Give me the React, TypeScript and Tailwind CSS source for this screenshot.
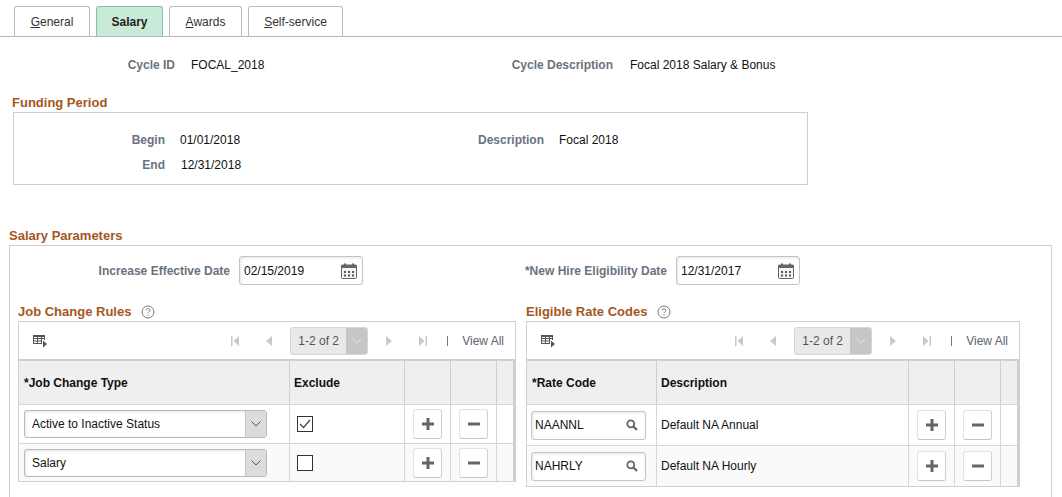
import React from 'react';

const font = 'font-["Liberation_Sans",Arial,sans-serif]';
const heading = 'text-[13px] font-bold leading-[16px] text-[#a5561e]';
const label = 'text-[12px] font-bold leading-[16px] text-[#6a7280] text-right';
const th = 'border-r border-[#cfcfcf] bg-[#efefef] flex items-center text-[12px] font-bold text-[#111]';

function Calendar() {
  return (
    <svg width="16" height="16" viewBox="0 0 16 16" className="shrink-0">
      <rect x="0.5" y="2" width="15" height="13.5" rx="1" fill="#f4f4f4" stroke="#666" />
      <rect x="0" y="2" width="16" height="3" fill="#666" />
      <rect x="3" y="0.5" width="2" height="2.5" fill="#666" />
      <rect x="11" y="0.5" width="2" height="2.5" fill="#666" />
      <path d="M3 8h2v2H3zM7 8h2v2H7zM11 8h2v2h-2zM3 11.5h2v2H3zM7 11.5h2v2H7zM11 11.5h2v2h-2z" fill="#555" />
    </svg>
  );
}

function Help() {
  return (
    <svg width="14" height="14" viewBox="0 0 14 14">
      <circle cx="7" cy="7" r="6" fill="none" stroke="#777" />
      <path d="M5 5.4C5 4.2 6 3.7 7 3.7s2 .6 2 1.6c0 1.4-2 1.500-2 3" fill="none" stroke="#777" />
      <rect x="6.500" y="9.400" width="1" height="1.200" fill="#777" />
    </svg>
  );
}

function GridIcon() {
  return (
    <svg width="15" height="14" viewBox="0 0 15 14">
      <path d="M0 1h12v9H0z" fill="#fff" stroke="none" />
      <path d="M0 1.500h12M0 4.500h12M0 7h9M0 9.500h8M.5 1v9M4.500 2v8M8.500 2v8M11.500 1v5" stroke="#555" fill="none" />
      <rect x="0" y="1" width="12" height="2" fill="#555" />
      <path d="M10 6.500l4 3.500-4 3.500z" fill="#555" />
    </svg>
  );
}

function Nav({ kind }: { kind: 'first' | 'prev' | 'next' | 'last' }) {
  return (
    <svg width="10" height="12" viewBox="0 0 10 12" className="shrink-0">
      {kind === 'first' && <path d="M1 1h1.500v10H1zM9 1v10L3.500 6z" fill="#c9c9c9" />}
      {kind === 'prev' && <path d="M8 1v10L2 6z" fill="#c9c9c9" />}
      {kind === 'next' && <path d="M2 1v10l6-5z" fill="#c9c9c9" />}
      {kind === 'last' && <path d="M7.500 1H9v10H7.500zM1 1v10l5.500-5z" fill="#c9c9c9" />}
    </svg>
  );
}

function Chevron({ color }: { color: string }) {
  return (
    <svg width="10" height="6" viewBox="0 0 10 6">
      <path d="M.5.500L5 5 9.500.500" fill="none" stroke={color} />
    </svg>
  );
}

function Search() {
  return (
    <svg width="12" height="12" viewBox="0 0 12 12" className="shrink-0">
      <circle cx="4.800" cy="4.800" r="3.500" fill="none" stroke="#666" strokeWidth="1.800" />
      <path d="M7.500 7.500l3.500 3.500" stroke="#666" strokeWidth="2.200" />
    </svg>
  );
}

function IconButton({ minus }: { minus?: boolean }) {
  return (
    <div className="w-[29px] h-[30px] bg-white border border-[#e2e2e2] border-b-[#c4c4c4] border-r-[#d0d0d0] rounded-[3px] flex items-center justify-center">
      <svg width="14" height="14" viewBox="0 0 14 14">
        <rect x="1" y="5.500" width="12" height="3" fill="#666" />
        {!minus && <rect x="5.500" y="1" width="3" height="12" fill="#666" />}
      </svg>
    </div>
  );
}

function Toolbar() {
  return (
    <div className="h-[37px] flex items-center pl-[14px] text-[12px] text-[#5c6470]">
      <GridIcon />
      <div className="ml-auto mr-[11px] flex items-center">
        <Nav kind="first" />
        <div className="w-[24px]" />
        <Nav kind="prev" />
        <div className="ml-[16px] w-[78px] h-[28px] rounded-[3px] border border-[#d6d6d6] bg-[#e9e9e9] flex overflow-hidden">
          <span className="flex-1 flex items-center justify-center text-[#555]">1-2 of 2</span>
          <span className="w-[21px] bg-[#c6c6c6] flex items-center justify-center">
            <Chevron color="#e4e4e4" />
          </span>
        </div>
        <div className="w-[16px]" />
        <Nav kind="next" />
        <div className="w-[24px]" />
        <Nav kind="last" />
        <div className="ml-[19px] w-px h-[10px] bg-[#777]" />
        <span className="ml-[14px] leading-[16px]">View All</span>
      </div>
    </div>
  );
}

function DateField({ value }: { value: string }) {
  return (
    <div className="w-[124px] h-[29px] border border-[#c4c4c4] rounded-[3px] bg-white shadow-[inset_1px_1px_3px_rgba(0,0,0,0.1)] flex items-center justify-between pl-[4px] pr-[5px] text-[12px] text-[#111]">
      <span>{value}</span>
      <Calendar />
    </div>
  );
}

function Select({ value }: { value: string }) {
  return (
    <div className="w-[243px] h-[28px] border border-[#b9b9b9] rounded-[3px] bg-white shadow-[inset_1px_1px_3px_rgba(0,0,0,0.1)] flex overflow-hidden text-[12px] text-[#111]">
      <span className="flex-1 flex items-center pl-[7px]">{value}</span>
      <span className="w-[21px] bg-[#dcdcdc] border-l border-[#c4c4c4] flex items-center justify-center">
        <Chevron color="#555" />
      </span>
    </div>
  );
}

function Check({ checked }: { checked?: boolean }) {
  return (
    <div className="ml-[3px] w-[16px] h-[16px] border border-[#333] bg-white flex items-center justify-center">
      {checked && (
        <svg width="12" height="10" viewBox="0 0 12 10">
          <path d="M1 5l3.500 3.500L11 1" fill="none" stroke="#444" strokeWidth="1.200" />
        </svg>
      )}
    </div>
  );
}

function Lookup({ value }: { value: string }) {
  return (
    <div className="w-[115px] h-[29px] border border-[#c4c4c4] rounded-[3px] bg-white shadow-[inset_1px_1px_3px_rgba(0,0,0,0.1)] flex items-center justify-between pl-[3px] pr-[7px] text-[12px] text-[#111]">
      <span>{value}</span>
      <Search />
    </div>
  );
}

const jobCols = 'grid grid-cols-[271px_115px_46px_46px_16px]';
const rateCols = 'grid grid-cols-[130px_252px_46px_46px_16px]';
const td = 'border-r border-[#d6d6d6] flex items-center text-[12px] text-[#111]';

function JobRow({ value, checked, odd }: { value: string; checked?: boolean; odd?: boolean }) {
  return (
    <div className={`${jobCols} border-t border-[#d6d6d6] ${odd ? 'h-[38px] bg-[#fafafa]' : 'h-[39px] bg-white'}`}>
      <div className={`${td} px-[5px]`}><Select value={value} /></div>
      <div className={`${td} px-[4px]`}><Check checked={checked} /></div>
      <div className={`${td} justify-center`}><IconButton /></div>
      <div className={`${td} justify-center`}><IconButton minus /></div>
      <div />
    </div>
  );
}

function RateRow({ code, desc, odd }: { code: string; desc: string; odd?: boolean }) {
  return (
    <div className={`${rateCols} h-[41px] border-t border-[#d6d6d6] ${odd ? 'bg-[#fafafa]' : 'bg-white'}`}>
      <div className={`${td} px-[4px]`}><Lookup value={code} /></div>
      <div className={`${td} px-[4px]`}>{desc}</div>
      <div className={`${td} justify-center`}><IconButton /></div>
      <div className={`${td} justify-center`}><IconButton minus /></div>
      <div />
    </div>
  );
}

export default function App() {
  return (
    <div className={`${font} w-[1062px] h-[497px] overflow-hidden bg-white text-[12px] text-[#111]`}>
      {/* tabs */}
      <div className="h-[37px] pt-[6px] pl-[14px] flex gap-[6px] border-b border-[#b5b5b5]">
        <div className="w-[76px] h-[30px] border border-b-0 border-[#bdbdbd] rounded-t-[3px] bg-white flex items-center justify-center text-[#333]"><span><u>G</u>eneral</span></div>
        <div className="w-[67px] h-[30px] border border-b-0 border-[#7dc8a2] rounded-t-[3px] bg-[#c9ead8] flex items-center justify-center font-bold text-[#222]">Salary</div>
        <div className="w-[73px] h-[30px] border border-b-0 border-[#bdbdbd] rounded-t-[3px] bg-white flex items-center justify-center text-[#333]"><span><u>A</u>wards</span></div>
        <div className="w-[95px] h-[30px] border border-b-0 border-[#bdbdbd] rounded-t-[3px] bg-white flex items-center justify-center text-[#333]"><span><u>S</u>elf-service</span></div>
      </div>

      {/* cycle */}
      <div className="flex items-center h-[16px] mt-[20px]">
        <div className={`${label} w-[175px]`}>Cycle ID</div>
        <div className="ml-[16px] w-[222px]">FOCAL_2018</div>
        <div className={`${label} w-[200px]`}>Cycle Description</div>
        <div className="ml-[17px]">Focal 2018 Salary &amp; Bonus</div>
      </div>

      {/* funding period */}
      <div className={`${heading} ml-[12px] mt-[22px]`}>Funding Period</div>
      <div className="ml-[13px] mt-[1px] w-[795px] h-[73px] border border-[#cfcfcf] pt-[19px]">
        <div className="flex items-center h-[16px]">
          <div className={`${label} w-[151px]`}>Begin</div>
          <div className="ml-[15px] w-[115px]">01/01/2018</div>
          <div className={`${label} w-[249px]`}>Description</div>
          <div className="ml-[15px]">Focal 2018</div>
        </div>
        <div className="flex items-center h-[16px] mt-[9px]">
          <div className={`${label} w-[151px]`}>End</div>
          <div className="ml-[16px]">12/31/2018</div>
        </div>
      </div>

      {/* salary parameters */}
      <div className={`${heading} ml-[9px] mt-[43px]`}>Salary Parameters</div>
      <div className="ml-[9px] mt-[1px] w-[1043px] h-[260px] border border-[#cfcfcf] pt-[10px]">
        <div className="flex items-center">
          <div className={`${label} w-[220px]`}>Increase Effective Date</div>
          <div className="ml-[9px]"><DateField value="02/15/2019" /></div>
          <div className={`${label} w-[304px]`}>*New Hire Eligibility Date</div>
          <div className="ml-[9px]"><DateField value="12/31/2017" /></div>
        </div>

        <div className="flex mt-[19px] pl-[8px]">
          {/* job change rules */}
          <div className="w-[498px]">
            <div className={`${heading} flex items-center gap-[10px] h-[16px] mb-[1px]`}>
              <span>Job Change Rules</span>
              <Help />
            </div>
            <div className="border border-[#cfcfcf]">
              <Toolbar />
              <div className="border-r-2 border-[#cfcfcf]">
                <div className={`${jobCols} h-[45px] border-t-2 border-[#cfcfcf]`}>
                  <div className={`${th} px-[5px]`}>*Job Change Type</div>
                  <div className={`${th} px-[4px]`}>Exclude</div>
                  <div className={th} />
                  <div className={th} />
                  <div className="bg-[#efefef]" />
                </div>
                <JobRow value="Active to Inactive Status" checked />
                <JobRow value="Salary" odd />
              </div>
            </div>
          </div>

          {/* eligible rate codes */}
          <div className="w-[494px] ml-[10px]">
            <div className={`${heading} flex items-center gap-[10px] h-[16px] mb-[1px]`}>
              <span>Eligible Rate Codes</span>
              <Help />
            </div>
            <div className="border border-[#cfcfcf]">
              <Toolbar />
              <div className="border-r-2 border-[#cfcfcf]">
                <div className={`${rateCols} h-[45px] border-t-2 border-[#cfcfcf]`}>
                  <div className={`${th} px-[5px]`}>*Rate Code</div>
                  <div className={`${th} px-[4px]`}>Description</div>
                  <div className={th} />
                  <div className={th} />
                  <div className="bg-[#efefef]" />
                </div>
                <RateRow code="NAANNL" desc="Default NA Annual" />
                <RateRow code="NAHRLY" desc="Default NA Hourly" odd />
              </div>
            </div>
          </div>
        </div>
      </div>
    </div>
  );
}
